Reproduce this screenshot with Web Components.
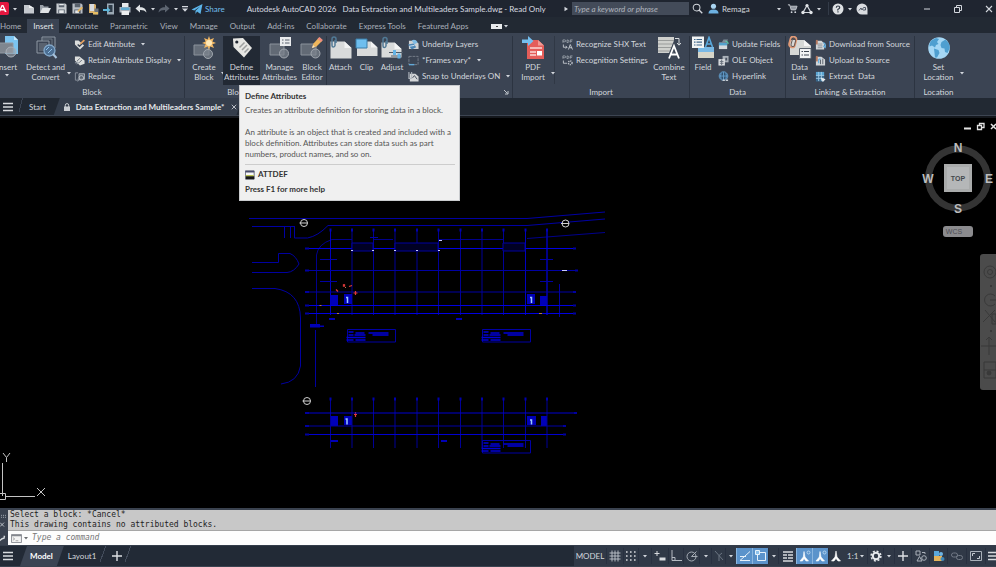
<!DOCTYPE html>
<html lang="en">
<head>
<meta charset="utf-8">
<title>Autodesk AutoCAD 2026</title>
<style>
html,body{margin:0;height:100%;background:#000;overflow:hidden}
body{font:8px/10px Lato,"Open Sans",sans-serif;color:#d3d7dd}
</style>
</head>
<body>
<cad-app></cad-app>
<script>
const ICONS = {
  caret:['0 0 6 6','<path d="M1 2h4L3 4.400z" fill="#d3d7dd"/>'],
  logo:['0 0 9 13','<path d="M0 0h7q2 0 2 2v9q0 2-2 2H0z" fill="#e5173f"/><path d="M-1.500 10 1.600 3H3.400L6.600 10H4.800L4.200 8.400H.600L0 10zM1.200 7H3.700L2.500 4.300z" fill="#fff"/>'],
  fresh:['0 0 12 12','<path d="M1 2h5l5 3v5.500H1z" fill="#c5c9cf"/><path d="M6 2v3h5z" fill="#eef0f2"/>'],
  open:['0 0 12 12','<path d="M1 10V2h3l1 1.500h4.500V5" fill="#9aa0a8"/><path d="M1 10 3.500 5H12L9.500 10z" fill="#dfe2e5"/>'],
  save:['0 0 12 12','<path d="M.5.500h9.500L11.500 2v9.500H.5z" fill="#c9cdd2"/><path d="M3 .5h6V4.500H3zM2.500 7h7v4.500h-7z" fill="#5b6470"/><path d="M3.500 1h5v1.500h-5zM3.500 8h5v2.800h-5z" fill="#e9ebed"/>'],
  saveas:['0 0 12 12','<path d="M.5.500h9.500L11.500 2v9.500H.5z" fill="#b9bec5"/><path d="M3 .5h6V4.500H3zM2.500 7h7v4.500h-7z" fill="#59616c"/><path d="M3.500 8h4v3h-4z" fill="#e4e7ea"/><path d="m6 10 .7-2.300 4-3.700 1.300 1.400-4 3.700z" fill="#e9b75c"/>'],
  sheet:['0 0 12 12','<path d="M2 1h6l1 1v8H2z" fill="#d6ae6b"/><path d="M3 1h4v7H3z" fill="#d9dce0"/><path d="M7.500 5.500h4v6h-4z" fill="#6a727e"/><path d="M6 9h5v2.500H6z" fill="#e6bd63"/>'],
  mobile:['0 0 12 12','<path d="M4 .5h7v11H4z" fill="#9ba8b4"/><path d="M5.500 2h4v7h-4z" fill="#2e3b48"/><path d="M0 6h4V4l3.500 3L4 10V8H0z" fill="#5fb4d8"/>'],
  print:['0 0 12 12','<path d="M3 0h6.500v5H3z" fill="#e7e9eb"/><path d="M.5 4h11v5.500H.5z" fill="#aab2bb"/><path d="M2 4.500h8.500V7H2z" fill="#5fa9cf"/><path d="M2.500 8h7.500v4H2.500z" fill="#eceef0"/>'],
  undo:['0 0 12 12','<path d="M.5 5.500 5 1.500v2.700c4 0 6 1.800 6.500 5.300C10 7.500 8 6.800 5 6.900v2.600z" fill="#e0e3e6"/>'],
  redo:['0 0 12 12','<path d="M11.500 5.500 7 1.500v2.700c-4 0-6 1.800-6.500 5.300C2 7.500 4 6.800 7 6.900v2.600z" fill="#5d6571"/>'],
  custom:['0 0 8 8','<path d="M1 1h6v1.200H1zM1 3.500h6L4 6.800z" fill="#d3d7dd"/>'],
  send:['0 0 12 12','<path d="M.5 6.500 11.500 1 9.500 11 6 8.500 4.500 11V7.800L9 3.500 3.300 7.500z" fill="#5db5ea"/>'],
  play:['0 0 6 6','<path d="M1.500.800v4.400L5 3z" fill="#d3d7dd"/>'],
  search:['0 0 12 12','<circle cx="5" cy="5" r="3.700" fill="none" stroke="#d3d7dd" stroke-width="1.100"/><path d="m7.700 7.700 3.500 3.500" stroke="#d3d7dd" stroke-width="1.500"/>'],
  user:['0 0 12 12','<circle cx="6" cy="3.500" r="2.800" fill="#a9d4f0"/><path d="M.5 11.500c0-3 2-4.500 5.500-4.500s5.500 1.500 5.500 4.500z" fill="#6db1e2"/>'],
  cart:['0 0 12 12','<path d="M1 2h2l1.500 5.500h5L11 3.500H4" fill="#9298a1" stroke="#c3c7cd"/><circle cx="5" cy="10" r="1" fill="#d3d7dd"/><circle cx="9" cy="10" r="1" fill="#d3d7dd"/>'],
  share3:['0 0 12 12','<path d="M6 2.500 2 9.500h8z" fill="none" stroke="#d3d7dd" stroke-width="1.200"/><circle cx="6" cy="2.500" r="1.600" fill="#e3e6e9"/><circle cx="2" cy="9.500" r="1.700" fill="#e3e6e9"/><circle cx="10" cy="9.500" r="1.700" fill="#e3e6e9"/>'],
  help:['0 0 12 12','<circle cx="6" cy="6" r="5.500" fill="#dde0e3"/><path d="M4.300 4.700Q4.300 3 6 3t1.700 1.500Q7.700 5.500 6.500 6T6 7.500M6 8.300v1.200" fill="none" stroke="#343c48" stroke-width="1.200"/>'],
  chat:['0 0 12 12','<path d="M6 .5a5.500 5.500 0 1 0 0 11h5.500V6A5.500 5.500 0 0 0 6 .5z" fill="#d8dbdf"/><path d="M3 7.500 5 5l1 2 1.500-2.500 2 0v2.500H7" fill="none" stroke="#4c5562"/>'],
  min:['0 0 8 8','<path d="M1 4h6" stroke="#d3d7dd"/>'],
  restore:['0 0 8 8','<path d="M.5 2.500h5v5h-5zM2.500 2.500v-2h5v5h-2" fill="none" stroke="#d3d7dd"/>'],
  close:['0 0 8 8','<path d="m1 1 6 6M7 1 1 7" stroke="#d3d7dd" stroke-width="1.100"/>'],
  pill:['0 0 11 5','<rect width="11" height="5" fill="#e8eaec"/><rect x="5" y="2" width="2" height="1" fill="#444"/>'],
  menu:['0 0 12 12','<path d="M1 2.500h10M1 6h10M1 9.500h10" stroke="#d8dbdf" stroke-width="1.400"/>'],
  lock:['0 0 8 8','<path d="M1 3.500h6V8H1z" fill="#c9cdd2"/><path d="M2.300 4V2.300Q2.300.600 4 .6T5.700 2.300V4" fill="none" stroke="#c9cdd2"/>'],
  insert:['0 0 24 24','<path d="M10 0h9l4 4v14H10z" fill="#7cc4f0"/><path d="M19 0v4h4z" fill="#c6e6fa"/><path d="M0 7h18v10H0z" fill="#7f868f" stroke="#9299a2"/><circle cx="16" cy="16" r="5" fill="#99a0a8" fill-opacity=".6" stroke="#aab0b8"/>'],
  detect:['0 0 24 24','<path d="M8 5V1h13v11M3 5h12v12H3z" fill="none" stroke="#8f98a4"/><path d="M5 7h8v8H5z" fill="#59626f"/><path d="M7 3h11v11" fill="none" stroke="#6b7480"/><circle cx="15.500" cy="14.500" r="5.500" fill="#4c6f93" stroke="#84a9cb" stroke-width="1.300"/><path d="m19 18 3.500 4" stroke="#a8c3dc" stroke-width="2"/><path d="m12 14 3-3M14 17l4-4" stroke="#8fc1ea"/>'],
  create:['0 0 24 24','<path d="M2 9h15v10H2z" fill="#666e79" stroke="#8a919b"/><circle cx="16" cy="18" r="4.500" fill="#7d858f" fill-opacity=".7" stroke="#a1a7af"/><path d="m17 0 1.200 3.600L22 2l-1.600 3.600L24 7l-3.600 1.300L22 12l-3.800-1.600L17 14l-1.300-3.600L12 12l1.600-3.700L10 7l3.600-1.400L12 2l3.700 1.600z" fill="#f0b765"/><circle cx="17" cy="7" r="3" fill="#ffe9b8"/>'],
  tag:['0 0 24 24','<path d="M3 2.500 13 2 22 12 14 21.500 3.500 11z" fill="#e6e6e3"/><circle cx="6.800" cy="6" r="1.600" fill="#202732"/><path d="m9.500 11.500 5-5M12 14l5-5M14.500 16.500l4-4" stroke="#9d9f9f" stroke-width="1.500"/>'],
  manage:['0 0 24 24','<path d="M2 8h14v11H2z" fill="#626a75" stroke="#8a919b"/><circle cx="16" cy="17.500" r="4.500" fill="#7d858f" fill-opacity=".7" stroke="#a1a7af"/><path d="M12 1h11v9H12z" fill="#e9ebed"/><path d="M14 4h1.500M14 7h1.500M17 4h4.500M17 7h4.500" stroke="#59616d"/>'],
  editor:['0 0 24 24','<path d="M1 8h15v11H1z" fill="#626a75" stroke="#8a919b"/><circle cx="15.500" cy="17.500" r="4.500" fill="#7d858f" fill-opacity=".7" stroke="#a1a7af"/><path d="m12 12 1.500-4.500L19 1.500l3.500 3-6 6z" fill="#eeb65c"/><path d="m17.500 3 3.500 3 1.800-2-3.300-3z" fill="#ee8d80"/><path d="m12 12 1-3 2 2z" fill="#f5e3c4"/>'],
  attach:['0 0 24 24','<path d="M1.500 5.500h14l7 6.500v10.500h-21z" fill="#d9dbdb"/><path d="M15.500 5.500V12h7z" fill="#f3f4f4"/><path d="M7 7V3q0-2-2-2T3 3v6.500q0 1.500 1.400 1.500T6 9.500V4" fill="none" stroke="#517a96" stroke-width="1.500"/>'],
  clip:['0 0 24 24','<path d="M2 5.500h14l6.500 6v8.500H2z" fill="#d9dbdb"/><path d="M16 5.500v6h6.500z" fill="#f3f4f4"/><path d="M1 3h11v9H1z" fill="#6ebeee" stroke="#3a7ca8"/>'],
  adjust:['0 0 24 24','<path d="M1.500 6.500h13l7 6.500v8.500h-20z" fill="#d9dbdb"/><path d="M14.500 6.500V13h7z" fill="#f3f4f4"/><path d="M7 8V3.500q0-2-2-2t-2 2V10q0 1.500 1.400 1.500T6 10V5" fill="none" stroke="#517a96" stroke-width="1.500"/><path d="M9 16.500h14M11 20h10" stroke="#4c5a68"/><path d="M13 14h3v5h-3zM17.500 17.500h3v5h-3z" fill="#65b5e8"/>'],
  pdf:['0 0 24 24','<path d="M6 4h11l6 5.500V23H6z" fill="#e45d59"/><path d="M17 4v5.500h6z" fill="#f29a93"/><path d="M9 12h12M9 19h6M9 16h6" stroke="#fbd9d6" stroke-width="1.400"/><path d="M16 15h5v4.500h-5z" fill="#fff"/><path d="M1 3.500h6V0l5.500 5L7 10V7H1z" fill="#74bff0"/>'],
  combine:['0 0 24 24','<path d="M1 1h16v16H1z" fill="#cfd0cd"/><path d="M1 4.500h16M1 8h16M1 11.500h16M1 15h12" stroke="#9a9c9b"/><path d="M18 2.500h4V9m-2-2 2 2.200L24 7" fill="none" stroke="#d9dcdf"/><path d="M12 22.500 17 10l5 12.500M14 18.500h6" stroke="#3b4453" stroke-width="4" fill="none"/><path d="M12 22.500 17 10l5 12.500M14 18.500h6" stroke="#fff" stroke-width="1.800" fill="none"/>'],
  field:['0 0 24 24','<path d="M7 11h16v5H7z" fill="#7ab9e5"/><path d="M7 16h16v6H7z" fill="#d6d5c8"/><path d="M1 .5h12v11.500H1z" fill="#f1f3f4"/><path d="M3 3.500h1.500M3 6.200h1.500M3 9h1.500M5.500 3.500h5.500M5.500 6.200h5.500M5.500 9h5.500" stroke="#41698d" stroke-width="1.200"/><path d="m14.500 11 3.500-9.500L21.500 11M15.500 8h5" stroke="#59a8dc" stroke-width="1.600" fill="none"/>'],
  link:['0 0 24 24','<path d="M2 4h14l7 6v9H2z" fill="#d6d8d6"/><path d="M16 4v6h7z" fill="#f5f5f5"/><rect x="2" y=".5" width="6" height="11" rx="3" transform="rotate(15 5 5)" fill="none" stroke="#e09a77" stroke-width="1.800"/><rect x="4" y="2.500" width="3.500" height="8" rx="1.700" transform="rotate(15 5 5)" fill="none" stroke="#6a5a55"/><path d="M11.500 12.500H23V22.500H11.500z" fill="#f2f3f4" stroke="#5b636e"/><path d="M13.500 15.500H15M13.500 19H15M16 15.500h5M16 19h5" stroke="#3f4752"/>'],
  globe:['0 0 24 24','<circle cx="12" cy="12" r="10.800" fill="#a5d7f5"/><path d="M4 4.800 9 2l3 1-2 3 1.500 2-2.500 1-1 2.500-3-2-2.500 1q-.5-2.500 1.500-5.700zM7 12.500l4.500 1.500 1 3-2.500 4.500-2 0zM14.500 6l4-2.500 3.500 4 .8 4.500-2.300 5-2.500-1-.5-3.500-3-.5-1-3z" fill="#4f9fd0"/>'],
  edit:['0 0 12 12','<path d="M1 1.500h4l6 5.500-4.500 4.500L1 6z" fill="#dcdedd"/><path d="m4 6 2 2 5-5" fill="none" stroke="#3b4453" stroke-width="1.500"/><path d="m6 6 1-2 3.500-3.500L12 2 8 5.500z" fill="#e7a15d"/>'],
  retain:['0 0 12 12','<path d="M1 1.500h5L11.500 6v3.500l-5 2L1 6z" fill="#dcdedd"/><path d="m3.500 6.500 3-3M5.500 8.500l3-3" stroke="#606873"/><path d="M1 8.500h4M3 7l2 1.500L3 10" stroke="#a1a8b0" fill="none"/>'],
  replace:['0 0 12 12','<path d="M5.500 3h6v6h-6z" fill="#5c6571" stroke="#a9afb7"/><circle cx="8" cy="7.500" r="2.500" fill="none" stroke="#bcc1c8"/><path d="M4.500 2H1.500v8h4M4 8.500 5.500 10 4 11.500" fill="none" stroke="#8c949f"/>'],
  layers:['0 0 12 12','<path d="M1 2h7l3.500 3v6H1z" fill="#cfd2d4"/><path d="M4 1.500q4-2 6.500 2L7 6z" fill="#7fbce4"/><path d="m0 6 6-1 3 4-5 2.500z" fill="#4c86b5"/><path d="m1 8 6-1" stroke="#d4e8f5"/>'],
  frames:['0 0 12 12','<path d="M1 1.500h10v9H1z" fill="none" stroke="#79818c" stroke-dasharray="3 1"/><path d="M1 10.500h6" stroke="#62a9d8" stroke-width="1.500"/>'],
  snapu:['0 0 12 12','<path d="M2 3h6l3.500 3v5.500H2z" fill="#d4d6d8"/><path d="M1 1v7h3V1" fill="none" stroke="#b0b6bd" stroke-width="1.200"/><path d="M5 7.500 7 5l3 4" stroke="#3f4856" fill="none"/>'],
  shx:['0 0 12 12','<path d="M1 4V1h2q1 0 1 1T3 3H1M5.500 1v3Q7.500 4 7.500 2.500T5.500 1M9 4V1h2.500M9 2.500h2" fill="none" stroke="#a9afb8" stroke-width=".8"/><path d="M1.500 6v3h4M4 7.500 5.500 9 4 10.500M7 11.500l2-5.500 2.500 5.500M8 9.500h3" stroke="#c3c8ce" fill="none"/>'],
  rset:['0 0 12 12','<path d="M1 4V1h2q1 0 1 1T3 3H1M5.500 1v3Q7.500 4 7.500 2.500T5.500 1M9 4V1h2.500M9 2.500h2" fill="none" stroke="#a9afb8" stroke-width=".8"/><path d="M1.500 6v3h4" stroke="#c3c8ce" fill="none"/><circle cx="9" cy="8.500" r="2" fill="none" stroke="#b9bec5" stroke-width="1.600" stroke-dasharray="1.300 .800"/>'],
  update:['0 0 12 12','<path d="M1 4h9v7H1z" fill="#d5d9dc"/><path d="M1 4h9v3H1z" fill="#54a2cc"/><path d="M4 4 6 .5h5L9 4z" fill="#7b8996"/><path d="M8 2.500q3 0 3 3" stroke="#5cc6a2" fill="none" stroke-width="1.200"/>'],
  ole:['0 0 12 12','<path d="M5 1h6.500v7H5z" fill="#aab1b9"/><path d="M.5 4.500h7v7h-7z" fill="#dcdfe2"/><path d="M2 7h4M2 9h4M4 5v6" stroke="#626b77"/><path d="M8 3h2v3H8z" fill="#4a5360"/>'],
  hyper:['0 0 12 12','<circle cx="6" cy="5.500" r="4.700" fill="#33526f" stroke="#629dcb"/><path d="M1.500 5.500h9M6 1v9M3.500 2q-1.500 3.500 0 7M8.500 2q1.500 3.500 0 7" fill="none" stroke="#629dcb"/><path d="M5 10h2.500M8.500 10H11" stroke="#c6cbd1" stroke-width="1.600"/>'],
  down:['0 0 12 12','<path d="M1 2h6l3 3v6.500H1z" fill="#d2d5d8"/><path d="M3 5.500h5M3 7.500h5M3 9.500h5" stroke="#8a8f96"/><path d="M1 1h2v5H1z" fill="#b5785f"/><path d="M9 4q3 1 2 5l-2-1.500" fill="none" stroke="#69b3e2" stroke-width="1.500"/>'],
  up:['0 0 12 12','<path d="M1 2h6l4 3v6.500H1z" fill="#d2d5d8"/><path d="M6 5v5M8.500 4v6" stroke="#555d68"/><path d="M1 1h2v6H1z" fill="#b5785f"/><path d="M4 9V5l2-1" fill="none" stroke="#69b3e2" stroke-width="1.400"/>'],
  extract:['0 0 12 12','<path d="M1 1h9v4H1z" fill="#5ba5d2"/><path d="M1 5h9v6.500H1z" fill="#38668a"/><path d="M1 5h9M1 8h9M4 1v10M7 1v10" stroke="#9fcbe6"/><path d="m6 7 5.500 2-3 3z" fill="#e7eaec"/>'],
  attdef:['0 0 12 12','<path d="M.5 1h10.500v10H.5z" fill="#f8f8f8" stroke="#56596b"/><path d="M.5 1h10.500v2H.5z" fill="#4a4d6e"/><path d="M1 6h9.500v2H1z" fill="#b8c24e"/><path d="M1 7.500h10v3.500H1z" fill="#181818"/>'],
  dragbar:['0 0 8 36','<path d="M1 5.500h6M1 7.500h6" stroke="#a4abb5" stroke-dasharray="1 1"/><path d="M0 13 4 17M4 13 0 17" stroke="#bfc4cb"/><path d="m-1 32 3-2.500 2-.5 .5-2.500" fill="none" stroke="#d5d9dd" stroke-width="1.500"/>'],
  prompt:['0 0 12 10','<path d="M.5.500h11v9H.5z" fill="#f4f4f4" stroke="#84888e"/><path d="M.5 1h11v1.500H.5z" fill="#84888e"/><path d="m2 4 2 1.500L2 7M5 7.500h3" stroke="#888" fill="none" stroke-width=".8"/>'],
  plus:['0 0 12 12','<path d="M6 1v10M1 6h10" stroke="#dde0e4" stroke-width="1.400"/>'],
  grid:['0 0 12 12','<path d="M3 .5v11M6 .5v11M9 .5v11M.5 3h11M.5 6h11M.5 9h11" stroke="#c2c7ce" stroke-width=".9"/>'],
  dots:['0 0 12 12','<path d="M1 2h10M1 6h10M1 10h10" stroke="#d7dade" stroke-width="1.600" stroke-dasharray="1.600 2.400"/>'],
  dyn:['0 0 12 12','<path d="M3 1v5M.5 3.500h5" stroke="#d7dade"/><path d="M5.500 7.500h6v3h-6z" fill="#d7dade"/>'],
  ortho:['0 0 12 12','<path d="M2 0v10.500h10M2 7.500h3v3" fill="none" stroke="#b6bcc4"/>'],
  polar:['0 0 12 12','<circle cx="5.500" cy="6.500" r="4.500" fill="none" stroke="#a5acb5"/><path d="M5.500 6.500h6M5.500 6.500 10.500 1.500" stroke="#a5acb5"/>'],
  iso:['0 0 12 12','<path d="m2 1 8 9M6 5.500V11M6 5.500 9 3" stroke="#6c7683" fill="none"/>'],
  track:['0 0 12 12','<path d="M1 10.500 11 1.500M1 6.500h6M1 10.500h10" stroke="#e6f1fa" fill="none"/>'],
  osnap:['0 0 12 12','<path d="M2.500 2.500h8v8h-8z" fill="none" stroke="#e6f1fa"/><path d="M.5.500h4v4h-4z" fill="#8ec2ec" stroke="#e6f1fa"/>'],
  lines:['0 0 12 12','<path d="M1 2h10M1 5h4m1 0h5M1 8h4m1 0h5M1 11h10" stroke="#d7dade" stroke-width="1.300"/>'],
  anno:['0 0 12 12','<path d="M6 1 5 7 1.500 11H4L6 8.500 8 11h2.500L7 7z" fill="#fff" stroke="#fff" stroke-width=".6"/>'],
  anno2:['0 0 12 12','<path d="M5 1.500 4.300 7 1 11h2.500L5 8.500 7 11h2.500L6 7z" fill="#fff" stroke="#fff" stroke-width=".6"/><circle cx="9.500" cy="2.500" r="1.500" fill="none" stroke="#b4d3ef"/>'],
  gear:['0 0 12 12','<circle cx="6" cy="6" r="3.200" fill="none" stroke="#e6e9ec" stroke-width="2"/><circle cx="6" cy="6" r="4.900" fill="none" stroke="#e6e9ec" stroke-width="1.500" stroke-dasharray="2 1.850"/>'],
  units:['0 0 12 12','<path d="M1 1h4v4H1zM4.500 6.500l2.500 4.500H2z" fill="none" stroke="#a9b0b9"/><circle cx="9" cy="8" r="2.300" fill="none" stroke="#a9b0b9"/><path d="M7 2.500h3V4" fill="none" stroke="#a9b0b9"/>'],
  hard:['0 0 12 12','<path d="M1 1h5v5H1z" fill="#5ba9dc"/><path d="M1 6h8v5H1z" fill="#e5b45a"/><circle cx="8" cy="4" r="2" fill="#6eb6e4"/><circle cx="9.500" cy="9" r="2" fill="#3f87b8"/>'],
  iso2:['0 0 12 12','<rect x=".5" y="3" width="6" height="4" rx="2" fill="none" stroke="#727a86"/><rect x="5.500" y="5.500" width="6" height="4" rx="2" fill="none" stroke="#727a86"/>'],
  clean:['0 0 12 12','<path d="M.5 1.500h11v9H.5z" fill="none" stroke="#a9b0b9"/><path d="M2.500 6V3.500H5M9.500 6v2.500H7" fill="none" stroke="#c6cbd1"/>'],
  corner:['0 0 6 6','<path d="m1 1 3.500 3.500M5 2v3H2" stroke="#c3c8ce" fill="none"/>']
};
const make = (name, css, html) => customElements.define(name, class extends HTMLElement {
  connectedCallback(){
    if(this.shadowRoot) return;
    const root = this.attachShadow({mode:'open'});
    const t = document.createElement('template');
    t.innerHTML = '<style>*{box-sizing:border-box}button,input{font:inherit;color:inherit;border:0;margin:0;padding:0;background:none}button{display:block;text-align:center}a{color:inherit;text-decoration:none}' + css + '</style>' + (typeof html === 'function' ? html(this) : html);
    root.append(t.content.cloneNode(true));
  }
});
const ic = (n, w = 12, h = w) => `<cad-icon name="${n}" style="width:${w}px;height:${h}px"></cad-icon>`;

make('cad-icon', ':host{display:block;flex:none}svg{display:block;width:100%;height:100%}',
  el => { const [box, art] = ICONS[el.getAttribute('name')]; return `<svg viewBox="${box}" aria-hidden="true">${art}</svg>`; });

make('icon-button', ':host{display:flex;flex:none}button{width:100%;height:100%;display:flex;align-items:center;justify-content:center}',
  el => `<button type="button" aria-label="${el.getAttribute('label')}"><slot></slot></button>`);

const ib = (label, n, slot, w = 12, h = w) => `<icon-button label="${label}" style="width:${slot}px">${ic(n, w, h)}</icon-button>`;

make('title-bar', `
  :host{display:flex;align-items:center;height:17px;background:#1f2530;overflow:hidden}
  .share{display:flex;align-items:center;gap:2px;color:#71bfef;line-height:12px}
  h1{display:flex;gap:6px;margin:0 0 0 22px;font:inherit;color:#d8dbe0;white-space:nowrap}
  .right{display:flex;align-items:center;margin-left:auto}
  input{width:117px;height:13px;background:#434b59;padding:0 2px;font-style:italic}
  input::placeholder{color:#b0b5be;opacity:1}
  .user{width:51px;padding-left:1px}
  hr{width:1px;height:13px;border:0;background:#333b48;margin:0 0 0 6px}
  .win{display:flex;margin:0 -8px 0 40px}`,
  ic('logo',9,13) + ib('Application menu','caret',12,6) + ib('New','fresh',16) + ib('Open','open',16) + ib('Save','save',16,11) + ib('Save as','saveas',16,11) + ib('Sheet set','sheet',16) + ib('Open from mobile','mobile',16) + ib('Plot','print',16) + ib('Undo','undo',16) + ib('Undo list','caret',7,6) + ib('Redo','redo',16) + ib('Redo list','caret',7,6) + ib('Customize','custom',12,8) +
  `<a class="share" href="#share">${ic('send')}Share</a>
  <h1><span>Autodesk AutoCAD 2026</span><span>Data Extraction and Multileaders Sample.dwg - Read Only</span></h1>
  <div class="right">${ib('Collapse search','play',12,6)}<input type="text" aria-label="Search" placeholder="Type a keyword or phrase">${ib('Search','search',16,11)}${ib('Account','user',16,11)}<span class="user">Remaga</span>
  ${ib('Account menu','caret',14,6)}${ib('Store','cart',12,11)}${ib('Autodesk apps','share3',18,12)}${ib('Apps menu','caret',6,6)}<hr>${ib('Help','help',18,12)}${ib('Help menu','caret',6,6)}${ib('Assistant','chat',18,12)}
  <div class="win">${ib('Minimize','min',31,8)}${ib('Restore','restore',31,8)}${ib('Close','close',31,8)}</div></div>`);

make('menu-tabs', `
  :host{display:flex;align-items:stretch;height:16px;background:#222933;padding-top:2px;overflow:hidden}
  nav{display:flex;margin-left:-6px}
  a{padding:0 6px;line-height:14px;color:#a9afb9}
  a[aria-current]{background:#3b4453;color:#e2e5e9}
  .more{display:flex;align-items:center;margin-left:15px}`,
  '<nav>' + ['Home','Insert','Annotate','Parametric','View','Manage','Output','Add-ins','Collaborate','Express Tools','Featured Apps'].map(t => `<a href="#${t.toLowerCase().replace(' ','-')}"${t==='Insert'?' aria-current="page"':''}>${t}</a>`).join('') + `</nav><div class="more">${ib('Ribbon display','pill',14,11,5)}${ib('Ribbon options','caret',6,6)}</div>`);

make('big-tool', `
  :host{display:block;flex:none;width:var(--w,40px);height:49px;position:relative}
  :host([active]){background:#222934}
  button{width:100%;height:100%;display:flex;flex-direction:column;align-items:center;white-space:nowrap}
  .t{margin-top:2px;height:20px}
  .c{position:absolute;right:-3px;bottom:9px}
  :host([low]) .c{right:12px;bottom:7px}`,
  el => `<button type="button">${ic(el.getAttribute('icon'),24)}<span class="t"><slot></slot></span></button>${el.hasAttribute('menu') ? '<div class="c">' + ic('caret',6) + '</div>' : ''}`);

make('small-tool', `
  :host{display:block}
  button{display:flex;align-items:center;gap:3px;height:16px;white-space:nowrap}
  .c{margin-left:2px}`,
  el => `<button type="button">${ic(el.getAttribute('icon'),11)}<slot></slot>${el.hasAttribute('menu') ? '<div class="c">' + ic('caret',6) + '</div>' : ''}</button>`);

make('ribbon-panel', `
  :host{display:flex;flex:none;flex-direction:column;width:var(--w);border-right:1px solid #2c3441;position:relative}
  :host([last]){border:0}
  .row{display:flex;flex:1}
  h2{margin:0;font:inherit;text-align:center;line-height:12px;height:12px}
  .corner{position:absolute;right:3px;bottom:3px}`,
  el => `<div class="row"><slot></slot></div><h2>${el.getAttribute('label')}</h2>${el.hasAttribute('corner') ? '<div class="corner">' + ic('corner',6) + '</div>' : ''}`);

make('tool-ribbon', `
  :host{display:flex;height:65px;padding-top:3px;background:#3b4453;overflow:hidden}
  .col{display:flex;flex-direction:column;padding-left:var(--p,4px)}
  .line{border-left:1px solid #303845;margin:0 0 2px}`, `
  <ribbon-panel label="Block" style="--w:185px"><big-tool icon="insert" style="--w:30px;margin-left:-8px" menu low>Insert</big-tool><big-tool icon="detect" style="--w:47px" menu>Detect and<br>Convert</big-tool><div class="col" style="--p:5px"><small-tool icon="edit" menu>Edit Attribute</small-tool><small-tool icon="retain" menu>Retain Attribute Display</small-tool><small-tool icon="replace">Replace</small-tool></div></ribbon-panel>
  <ribbon-panel label="Block Definition" style="--w:142px"><big-tool icon="create" style="--w:38px" menu>Create<br>Block</big-tool><big-tool icon="tag" style="--w:37px" active>Define<br>Attributes</big-tool><big-tool icon="manage" style="--w:39px">Manage<br>Attributes</big-tool><big-tool icon="editor" style="--w:26px">Block<br>Editor</big-tool></ribbon-panel>
  <ribbon-panel label="Reference" style="--w:186px" corner><big-tool icon="attach" style="--w:27px">Attach</big-tool><big-tool icon="clip" style="--w:25px">Clip</big-tool><big-tool icon="adjust" style="--w:26px">Adjust</big-tool><div class="col" style="--p:3px"><small-tool icon="layers">Underlay Layers</small-tool><small-tool icon="frames" menu>*Frames vary*</small-tool><small-tool icon="snapu" menu>Snap to Underlays ON</small-tool></div></ribbon-panel>
  <ribbon-panel label="Import" style="--w:177px"><big-tool icon="pdf" style="--w:40px" menu>PDF<br>Import</big-tool><div class="col line" style="--p:7px;margin-left:1px;width:95px"><small-tool icon="shx">Recognize SHX Text</small-tool><small-tool icon="rset">Recognition Settings</small-tool></div><big-tool icon="combine" style="--w:40px">Combine<br>Text</big-tool></ribbon-panel>
  <ribbon-panel label="Data" style="--w:96px"><big-tool icon="field" style="--w:26px">Field</big-tool><div class="col" style="--p:2px"><small-tool icon="update">Update Fields</small-tool><small-tool icon="ole">OLE Object</small-tool><small-tool icon="hyper">Hyperlink</small-tool></div></ribbon-panel>
  <ribbon-panel label="Linking &amp; Extraction" style="--w:129px"><big-tool icon="link" style="--w:27px">Data<br>Link</big-tool><div class="col" style="--p:2px"><small-tool icon="down">Download from Source</small-tool><small-tool icon="up">Upload to Source</small-tool><small-tool icon="extract">Extract&nbsp; Data</small-tool></div></ribbon-panel>
  <ribbon-panel label="Location" style="--w:47px" last><big-tool icon="globe" style="--w:47px" menu>Set<br>Location</big-tool></ribbon-panel>`);

make('file-tabs', `
  :host{display:flex;height:18px;background:#222933;align-items:stretch;border-bottom:1px solid #3d4552;overflow:hidden}
  a{display:flex;align-items:center}
  .start{margin-left:3px;padding:0 8px 0 10px;background:linear-gradient(105deg,transparent 3px,#3b4453 3px,#3b4453 4px,transparent 4px)}
  .wrap{display:flex;background:#343d4b;clip-path:polygon(6px 0,100% 0,calc(100% - 6px) 100%,0 100%);padding-right:4px}
  .doc{gap:5px;padding:0 6px 0 9px;font-weight:bold;color:#e6e9ec}`,
  `${ib('File tab menu','menu',16,12)}<a class="start" href="#start">Start</a><div class="wrap"><a class="doc" href="#doc">${ic('lock',8)}Data Extraction and Multileaders Sample*</a>${ib('Close file','close',8,6)}</div>`);

const XS = [330.5,352,373.5,395,417,438.5,460.5,482,503.5,525.5,547];
const tableArt = (x, y) => `<path d="M${x} ${y}h48v12.500h-48z" stroke="#0000a4" fill="none"/><path d="M${x+1} ${y+2.500}h5m2 1h9m-16 2h5m1 0h11m7 0h16m-42 2.500h19m-19 2.500h7m2 0h10m3-7h20" stroke="#0000d8" stroke-width="1.700"/>`;
const bubble = (x, y) => `<circle cx="${x}" cy="${y}" r="3.500" fill="#000" stroke="#d0d0d0"/><path d="M${x-4.500} ${y}h8" stroke="#d0d0d0"/>`;
const heads = (y) => XS.map(x => `<path d="M${x-1} ${y}h2" stroke="#0000b0" stroke-width="3"/>`).join('');
const stops = (y, r) => `<path d="M305 ${y}h4M${r-3} ${y}h3" stroke="#0000a0" stroke-width="2"/>`;
make('drawing-area', `
  :host{display:block;position:relative;flex:1;min-height:0;background:#000;overflow:hidden;border-top:2px solid #14171c}
  svg.plan{position:absolute;left:0;top:0;width:100%;height:100%}
  .ucs{position:absolute;left:0;bottom:6px;width:50px;height:52px}
  .cube{position:absolute;right:0;top:0;width:76px;height:130px}
  .nav{position:absolute;right:0;top:136px;width:16px;height:136px;background:#4b4b4b;border-radius:3px 0 0 3px}
  .nav svg{width:16px;height:136px;display:block}
  text{font-family:"Liberation Sans",sans-serif}`, `
  <svg class="plan" aria-label="Drawing"><g transform="translate(0 -118)" fill="none" stroke="#0000a4">
    <path d="M249 218.500H527L605 212M252 226.500H295M284.500 227v11M290.500 227v11M294.500 227v11h13Q318 236 328 225.500H527L605 219"/>
    <path d="M316.500 325V255Q318 244 332 239.500H352M373 239.500h20M438 239.500h65M527 238.500 605 232.500" stroke="#00008c"/>
    <path d="M252 262.500H278.500V253.500H290Q296 256 299 264 294 272 287 272.500H252M252 288.500H275Q300 292 300.500 318V366Q298 382 281 384M315.500 330V387" stroke="#0000a0"/>
    <path d="${XS.map(x => `M${x} 229V315`).join('')}" stroke="#000098"/>${heads(230)}
    <path d="M330.500 229V315M547 229V315M525.500 229V315" stroke="#0000c0"/>
    <path d="M305 270.500H578M305 292H576M559.500 284v33"/><path d="M305 248.500H576M305 305.500H576M305 313.500H576" stroke="#0000e0"/>
    <path d="M352 243h21v8h-21zM395 243h43v8h-43zM503 243h22v8h-22z" stroke="#0000a0" fill="#000024"/>
    <path d="M320 259.500h17M320 281.500h17M540 259.500h13M540 281.500h13M370 237.500h8"/>
    ${stops(248.500,576)}${stops(270.500,578)}${stops(292,576)}${stops(305.500,576)}${stops(313.500,576)}
    <g stroke="none" fill="#0000b8"><path d="M331 295h7v10h-7zM344 294h8v10h-8zM527 294h8v10h-8zM540 296h7v9h-7zM310 324h10v3.500h-10zM320 325.500h4v1.500h-4zM329 318h6v2h-6zM456 318h6v2h-6z"/>
    <path d="M331 416h7v10h-7zM344 416h8v9h-8zM527 416h9v9h-9zM541 416h6v10h-6zM331 440h7v2h-7zM441 440h6v2h-6z"/></g>
    <path d="M346 297.500h1.500V303M530 297.500h1.500V303M345.500 419h1.500v5.500M530 420h1.500v4.500" stroke="#9cc8ff" stroke-width="1.500"/>
    <path d="M351 250.500h2M372 250.500h2M394 250.500h2M416 250.500h2M438 250.500h2M439 240.500h3M562 270.500h5" stroke="#c8c8ff"/>
    <path d="M343 284.500l2 2M345 284.500l-2 2M349 286.500l3-1M353.500 293h4M355.500 291v4M336 289.500l2 2M354 414.500h3M355.500 412v5" stroke="#e03a3a" stroke-width="1.200"/><path d="M319.500 305.500h2M337 313.500h2M539 313.500h3M345 287.500h1" stroke="#b07a50"/>
    ${tableArt(347.500,329.500)}${tableArt(482.500,329.500)}
    <path d="${XS.map(x => `M${x} 398V448`).join('')}" stroke="#000098"/>${heads(399)}
    <path d="M305 413H577M305 434.500H566" stroke="#0000d0"/><path d="M305 426H566"/>
    ${stops(413,577)}${stops(426,566)}${stops(434.500,566)}${tableArt(482.500,440.500)}
    ${bubble(304,223)}${bubble(565.500,223.500)}${bubble(307,401)}
  </g></svg>
  <svg class="ucs" viewBox="0 0 50 52" fill="none" stroke="#c4c4c4"><path d="M3 3l3.500 4.500V12M10 3 6.500 7.500M2.500 13V46M0 43.500h5.500v6H0M5.500 46.500H35M37 38l8 8M45 38l-8 8"/></svg>
  <svg class="cube" viewBox="0 0 76 130"><path d="M44 10.500h7" stroke="#e4e4e4" stroke-width="2"/><path d="M57.500 7.500h4v4h-4zM59.500 7V5.500h4.500v4H62" fill="none" stroke="#e4e4e4" stroke-width="1.300"/><path d="m71 6 5 5M76 6l-5 5" stroke="#e4e4e4" stroke-width="1.500"/>
    <circle cx="38" cy="60.500" r="29.500" fill="none" stroke="#343434" stroke-width="7"/>
    <rect x="24" y="46" width="28" height="28" fill="#a9abab"/><rect x="27" y="49" width="22" height="22" fill="#b5b7b8"/>
    <g font-weight="bold" font-size="12" fill="#bdbdbd" text-anchor="middle"><text x="38" y="34">N</text><text x="38" y="95">S</text><text x="8" y="65">W</text><text x="69" y="65">E</text></g>
    <text x="38" y="63" font-size="7" font-weight="bold" fill="#43474c" text-anchor="middle">TOP</text>
    <rect x="23" y="108" width="30" height="11" rx="3" fill="#8b8b8e"/><text x="34" y="116" font-size="7" fill="#4e4e55" text-anchor="middle">WCS</text></svg>
  <div class="nav"><svg viewBox="0 0 16 136" fill="none" stroke="#393939"><circle cx="10" cy="18" r="6"/><circle cx="10" cy="18" r="2.500"/><path d="M15 42a6 6 0 1 0 0 8M10 46h6M5 56l10 12M15 56 3 68M12 60h4v10h-4zM9 83v18M1 92h15M6 86l3-3 3 3M4 108h12v16H4zM4 116h12"/><circle cx="9" cy="119" r="2" fill="#393939"/><path d="M10 32h2M10 77h2" stroke-width="2"/></svg></div>`);

make('command-line', `
  :host{display:flex;height:37px;background:#3a424f;padding-top:2px}
  .main{flex:1;display:flex;flex-direction:column;font:8px/10px "DejaVu Sans Mono",monospace}
  .log{height:21px;background:#c8c8c8;color:#1e1e1e;padding-left:2px;white-space:pre;border-bottom:1px solid #a5a5a5}
  .log p{margin:0}
  label{display:flex;flex:1;align-items:center;background:#fdfdfd;padding-left:3px;gap:1px}
  input{flex:1;margin-left:2px;font-style:italic;color:#777}
  input::placeholder{color:#777;opacity:1}
  .c{filter:brightness(.5)}`,
  `${ic('dragbar',8,35)}<div class="main"><div class="log"><p>Select a block: *Cancel*</p><p>This drawing contains no attributed blocks.</p></div><label>${ic('prompt',11,9)}<span class="c">${ic('caret',6)}</span><input type="text" aria-label="Command" placeholder="Type a command"></label></div>`);

const sb = (label, n, w, on) => `<div class="b${on?' on':''}" style="width:${w}px"><icon-button label="${label}" style="width:100%">${ic(n, n==='caret'?6:12)}</icon-button></div>`;
make('status-bar', `
  :host{display:flex;height:22px;background:#222a36;align-items:stretch;border-bottom:1px solid #3a4350;border-top:1px solid #333c4a;overflow:hidden}
  .tab{display:flex;align-items:center;line-height:20px}
  .model{font-weight:bold;color:#fff;background:#3b4453;padding:0 11px 0 10px;margin-left:4px;clip-path:polygon(7px 0,100% 0,calc(100% - 7px) 100%,0 100%)}
  .layout{padding:0 4px}
  .slash{width:9px;background:linear-gradient(110deg,transparent 5px,#434c5b 5px,#434c5b 6px,transparent 6px)}
  .tools{display:flex;margin:0 -3px 0 auto;background:#303947;padding:2px 0}
  .b{display:flex;border-left:1px solid #283040}
  .b.on{background:#5b93cb;border-left-color:#8bb6df}
  .txt{width:32px}
  .scale{display:flex;align-items:center;gap:1px;padding:0 2px 0 4px;width:24px}`,
  `${ib('Layout menu','menu',16,12)}<a class="tab model" href="#model">Model</a><a class="tab layout" href="#layout1">Layout1</a><span class="slash"></span>${ib('New layout','plus',16,12)}<span class="slash"></span>
  <div class="tools"><button class="txt" type="button">MODEL</button>${sb('Grid','grid',17)}${sb('Snap','dots',15)}${sb('Snap menu','caret',13)}${sb('Dynamic input','dyn',17)}${sb('Ortho','ortho',15)}${sb('Polar','polar',16)}${sb('Polar menu','caret',12)}${sb('Isodraft','iso',14)}${sb('Isodraft menu','caret',11)}${sb('Tracking','track',16,1)}${sb('Object snap','osnap',16,1)}${sb('Snap list','caret',10)}${sb('Lineweight','lines',18)}${sb('Annotation visibility','anno2',16,1)}${sb('Autoscale','anno2',16,1)}${sb('Annotation scale','anno',15)}<button class="scale" type="button">1:1${ic('caret',6)}</button>${sb('Workspace','gear',16)}${sb('Workspace menu','caret',11)}${sb('Monitor','plus',17)}${sb('Units','units',18)}${sb('Hardware','hard',18)}${sb('Isolate','iso2',19)}${sb('Clean screen','clean',19)}${sb('Customize','menu',14)}</div>`);

make('help-tip', `
  :host{box-sizing:border-box;display:block;width:221px;background:#f0f0f0;border:1px solid #c9cbce;color:#555;padding:5px 4px 5px 5px;line-height:11px}
  p{margin:0}
  strong{color:#333;display:block}
  .a{margin:3px 0 11px}
  hr{height:1px;border:0;background:#cdcdcd;margin:4px 0}
  .cmd{display:flex;align-items:center;gap:3px;margin-bottom:4px}`,
  `<strong>Define Attributes</strong><p class="a">Creates an attribute definition for storing data in a block.</p><p>An attribute is an object that is created and included with a block definition. Attributes can store data such as part numbers, product names, and so on.</p><hr><strong class="cmd">${ic('attdef',10)}ATTDEF</strong><strong>Press F1 for more help</strong>`);

make('cad-app', `
  :host{display:flex;flex-direction:column;height:100vh;position:relative;overflow:hidden}
  help-tip{position:absolute;left:239px;top:85px}
  title-bar,menu-tabs,tool-ribbon,file-tabs,command-line,status-bar{flex:none}`,
  '<title-bar></title-bar><menu-tabs></menu-tabs><tool-ribbon></tool-ribbon><file-tabs></file-tabs><drawing-area></drawing-area><command-line></command-line><status-bar></status-bar><help-tip role="tooltip"></help-tip>');
</script>
</body>
</html>
